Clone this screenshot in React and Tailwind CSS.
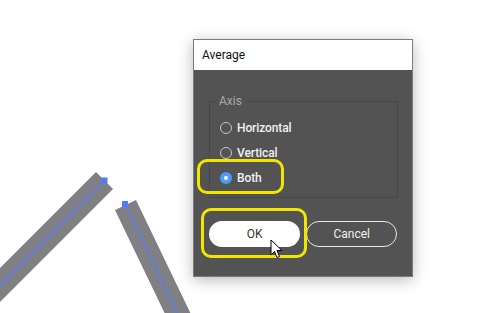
import React from "react";

function Radio({ label, checked }) {
  return (
    <div className="flex h-[25px] items-center gap-[5px]">
      {checked ? (
        <span className="flex h-[12px] w-[12px] items-center justify-center rounded-full bg-[#4b9cf5]">
          <span className="h-[4px] w-[4px] rounded-full bg-white" />
        </span>
      ) : (
        <span className="h-[12px] w-[12px] rounded-full border border-[#c8c8c8]" />
      )}
      <span className="text-[12px] font-medium leading-[14px] tracking-[-0.1px] text-[#f0f0f0]">{label}</span>
    </div>
  );
}

export default function App() {
  return (
    <div
      className="relative h-[313px] w-[479px] overflow-hidden bg-white"
      style={{ fontFamily: "Roboto, 'Liberation Sans', sans-serif" }}
    >
      <svg className="absolute left-0 top-0" width="479" height="313" viewBox="0 0 479 313">
        <polygon points="96,172 113,189 -30,332 -47,315" fill="#808084" />
        <line x1="104.5" y1="180.5" x2="-40" y2="325" stroke="#4d7cff" strokeWidth="1.3" />
        <rect x="101.5" y="177.5" width="6" height="6" fill="#4d7cff" />
        <polygon points="115,210 136,200 200,333 179,343" fill="#808084" />
        <line x1="125.5" y1="205" x2="189.5" y2="338" stroke="#4d7cff" strokeWidth="1.3" />
        <rect x="122" y="201" width="6" height="6" fill="#4d7cff" />
      </svg>

      <div className="absolute left-[193px] top-[39px] flex h-[238px] w-[220px] flex-col border border-[#7c7c7c] shadow-[0_3px_14px_rgba(0,0,0,0.28)]">
        <div className="flex h-[30px] items-center bg-white pl-[8px] text-[12px] text-[#111]">Average</div>
        <div className="flex flex-1 flex-col bg-[#535353] px-[15px] pt-[24px]">
          <fieldset className="h-[104px] w-[189px] border border-[#484848] pl-[10px] pt-[7px]">
            <legend className="ml-[-4px] px-[3px] text-[12px] leading-[14px] text-[#a9a9a9]">Axis</legend>
            <Radio label="Horizontal" />
            <Radio label="Vertical" />
            <Radio label="Both" checked />
          </fieldset>
          <div className="mt-[23px] flex gap-[6px]">
            <button className="h-[26px] w-[92px] rounded-full bg-white text-[12px] text-[#333]">OK</button>
            <button className="h-[26px] w-[91px] rounded-full border border-[#e8e8e8] text-[12px] text-[#f0f0f0]">Cancel</button>
          </div>
        </div>
      </div>

      <div className="absolute left-[197px] top-[159px] h-[35px] w-[87px] rounded-[10px] border-[3px] border-[#f2e600]" />
      <div className="absolute left-[201px] top-[208px] h-[50px] w-[106px] rounded-[10px] border-[3px] border-[#f2e600]" />

      <svg className="absolute left-[270px] top-[239px]" width="14" height="20" viewBox="0 0 14 20">
        <path d="M1 1 L1 16 L4.5 12.5 L7 18.5 L9.5 17.5 L7 11.5 L12 11.5 Z" fill="white" stroke="black" strokeWidth="1" strokeLinejoin="round" />
      </svg>
    </div>
  );
}
